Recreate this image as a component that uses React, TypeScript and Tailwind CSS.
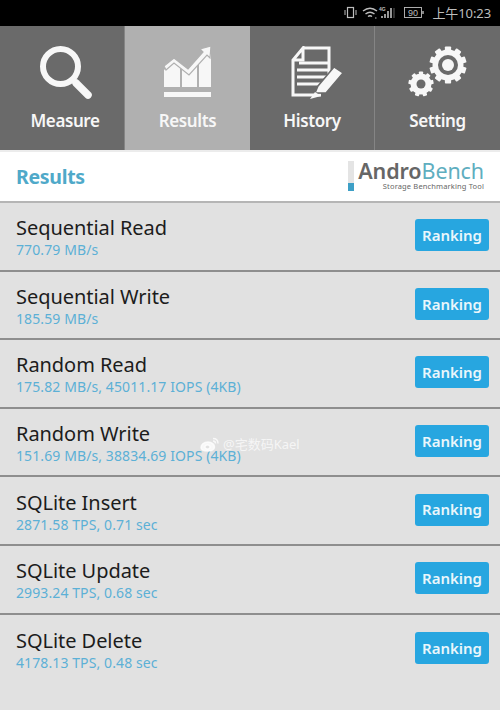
import React from "react";

function Tab({ label, active, border, shift, children }: { label: string; active?: boolean; border?: boolean; shift?: boolean; children: React.ReactNode }) {
  return (
    <div className={`w-[125px] shrink-0 box-border flex flex-col items-center ${active ? "bg-[#b0b0b0]" : "bg-[#6a6a6a]"} ${border ? "border-r border-[#858585]" : ""} ${shift ? "pl-[6px]" : ""}`}>
      <div className="h-[83px] w-full flex items-start justify-center pt-[20px]">{children}</div>
      <div className="text-[17px] leading-[24px] font-semibold text-[#f7f7f7] font-['Noto_Sans',sans-serif] tracking-[-0.4px]">{label}</div>
    </div>
  );
}

function Row({ title, value, last }: { title: string; value: string; last?: boolean }) {
  return (
    <div className={`h-[68.6px] flex items-center justify-between pl-4 pr-[11px] box-border ${last ? "" : "border-b-2 border-[#8e8e8e]"}`}>
      <div className="flex flex-col pt-[1px]">
        <div className="text-[20px] leading-[27px] text-[#1c1c1c] font-['Noto_Sans',sans-serif] tracking-[-0.05px]">{title}</div>
        <div className="text-[14px] leading-[18px] text-[#5cb0d6] font-['Noto_Sans',sans-serif] tracking-[0.1px]">{value}</div>
      </div>
      <button className="w-[74px] h-[32px] -mt-[2px] rounded-[3px] bg-[#27a6e0] text-[#eaf6fb] text-[15px] font-semibold font-['Noto_Sans',sans-serif]">Ranking</button>
    </div>
  );
}

function Gear({ cx, cy, r, hole, teeth, ring }: { cx: number; cy: number; r: number; hole: number; teeth: number; ring?: number }) {
  const t = Array.from({ length: teeth }, (_, i) => (i * 360) / teeth);
  return (
    <g>
      {t.map((a) => (
        <rect key={a} x={cx - r * 0.2} y={cy - r - r * 0.2} width={r * 0.4} height={r * 0.5} rx={0.8} fill="#f7f7f7" transform={`rotate(${a} ${cx} ${cy})`} />
      ))}
      <circle cx={cx} cy={cy} r={r} fill="#f7f7f7" />
      <circle cx={cx} cy={cy} r={hole} fill="#6a6a6a" />
      {ring ? <circle cx={cx} cy={cy} r={ring} fill="#f7f7f7" /> : null}
    </g>
  );
}

export default function App() {
  const rows = [
    ["Sequential Read", "770.79 MB/s"],
    ["Sequential Write", "185.59 MB/s"],
    ["Random Read", "175.82 MB/s, 45011.17 IOPS (4KB)"],
    ["Random Write", "151.69 MB/s, 38834.69 IOPS (4KB)"],
    ["SQLite Insert", "2871.58 TPS, 0.71 sec"],
    ["SQLite Update", "2993.24 TPS, 0.68 sec"],
    ["SQLite Delete", "4178.13 TPS, 0.48 sec"],
  ];
  return (
    <div className="relative w-[500px] h-[710px] overflow-hidden bg-[#e1e1e1] font-['Noto_Sans',sans-serif]">
      {/* status bar */}
      <div className="h-[26px] bg-black flex items-center justify-end pr-[9px] text-[#bdbdbd]">
        <svg width="86" height="14" viewBox="0 0 86 14" className="mr-[2px]" fill="none" stroke="#bdbdbd">
          <rect x="3.500" y="1.500" width="6" height="10" strokeWidth="1.200" />
          <path d="M1 4v5M12 4v5" strokeWidth="1" />
          <path d="M19 5q7-5.500 14 0M21.500 8q4.500-3.500 9 0M24 10.500q2-1.500 4 0" strokeWidth="1.400" />
          <path d="M31 12h1.500" strokeWidth="1" />
          <text x="35" y="5" fontSize="5" fill="#bdbdbd" stroke="none" fontFamily="'Liberation Sans',sans-serif" fontWeight="700">4G</text>
          <path d="M38 12v-2M41 12v-4M44 12v-7M47 12v-10" strokeWidth="1.600" />
          <path d="M50 12V2" strokeWidth="0.500" />
          <rect x="60.500" y="1.500" width="17" height="10" strokeWidth="0.900" />
          <path d="M79 5v3" strokeWidth="1.400" />
          <text x="69" y="10" fontSize="9" fill="#bdbdbd" stroke="none" textAnchor="middle" fontFamily="'Liberation Sans',sans-serif">90</text>
        </svg>
        <span className="text-[13px] leading-[26px] font-['Noto_Sans','Noto_Sans_CJK_SC',sans-serif] tracking-[-0.1px]">上午10:23</span>
      </div>

      {/* tabs */}
      <div className="h-[124px] flex">
        <Tab label="Measure" border shift>
          <svg width="54" height="56" viewBox="0 0 54 56" fill="none" stroke="#f7f7f7" className="ml-[4px]">
            <circle cx="20.500" cy="20.500" r="17.500" strokeWidth="6" />
            <path d="M33 33l3 3" strokeWidth="3" />
            <path d="M36 37l12 12" strokeWidth="7.500" strokeLinecap="round" />
          </svg>
        </Tab>
        <Tab label="Results" active>
          <svg width="50" height="54" viewBox="0 0 50 54" fill="#f7f7f7">
            <rect x="1" y="46" width="47" height="5" />
            <path d="M1 41V24l10-8 6 5v20zM19 41V22l7 5 8-9v23zM36 41V16l12-13v38z" />
            <path d="M1 20l10-8 14 11L40 6l-3-3 11-3-1 12-3-3-18 20-15-12L3 24z" stroke="#b0b0b0" strokeWidth="1.200" />
          </svg>
        </Tab>
        <Tab label="History" border>
          <svg width="54" height="56" viewBox="0 0 54 56" fill="none" stroke="#f7f7f7" className="ml-[12px]">
            <path d="M12 2h26v36M30 49H2V14L12 2v12H2" strokeWidth="3" />
            <path d="M8 17h30M6 24h32M6 31h32M6 38h26" strokeWidth="3" />
            <path d="M24 47l3-7 16-19 9 6-17 20z" fill="#f7f7f7" stroke="#6a6a6a" strokeWidth="1.500" />
            <path d="M19 53l5-7 6 4z" fill="#f7f7f7" stroke="none" />
          </svg>
        </Tab>
        <Tab label="Setting">
          <svg width="60" height="54" viewBox="0 0 60 54">
            <Gear cx={40} cy={19} r={15.500} hole={10} teeth={10} ring={6} />
            <Gear cx={13} cy={38} r={10.500} hole={4.500} teeth={9} />
          </svg>
        </Tab>
      </div>

      {/* header */}
      <div className="h-[53px] bg-white border-t-2 border-b-2 border-t-[#ececec] border-b-[#b5b5b5] box-border flex items-center justify-between pl-4 pr-4">
        <div className="text-[19.500px] leading-[26px] font-bold text-[#4fa9c9] tracking-[-0.3px] font-['Noto_Sans',sans-serif]">Results</div>
        <div className="flex items-stretch h-[30px] -mt-[2px]">
          <div className="w-[6px] h-[30px] mr-[4px] flex flex-col justify-end bg-[#e4e4e4]">
            <div className="h-[8px] bg-[#3d9fc6]" />
          </div>
          <div className="flex flex-col items-end">
            <div className="text-[21.500px] leading-[20px] text-[#666] tracking-[-0.1px] font-['Noto_Sans',sans-serif]">
              <span className="font-semibold">Andro</span>
              <span className="text-[#5faebf]">Bench</span>
            </div>
            <div className="text-[7.500px] leading-[10px] text-[#666] tracking-[0.15px] font-['Noto_Sans',sans-serif]">Storage Benchmarking Tool</div>
          </div>
        </div>
      </div>

      {/* rows */}
      <div>
        {rows.map(([t, v], i) => (
          <Row key={t} title={t} value={v} last={i === rows.length - 1} />
        ))}
      </div>

      {/* watermark */}
      <div className="absolute left-[200px] top-[436px] flex items-center gap-[3px] text-[13px] leading-[16px] text-white/70 font-['Noto_Sans','Noto_Sans_CJK_SC',sans-serif]">
        <svg width="20" height="15" viewBox="0 0 20 15" fill="#ffffff" fillOpacity="0.75" stroke="#ffffff" strokeOpacity="0.75" strokeWidth="1.500">
          <path fillRule="evenodd" d="M8 5C3.500 5 1 8 1 10.500S4 14 8 14s6.500-1.800 6.500-4S12 5 8 5z M7.500 8a2.500 2 0 1 0 .01 0z" />
          <path d="M13 1.500q5 0 5 5M13 4q2.500 0 2.500 2.500" fill="none" />
        </svg>
        <span>@宅数码Kael</span>
      </div>
    </div>
  );
}
